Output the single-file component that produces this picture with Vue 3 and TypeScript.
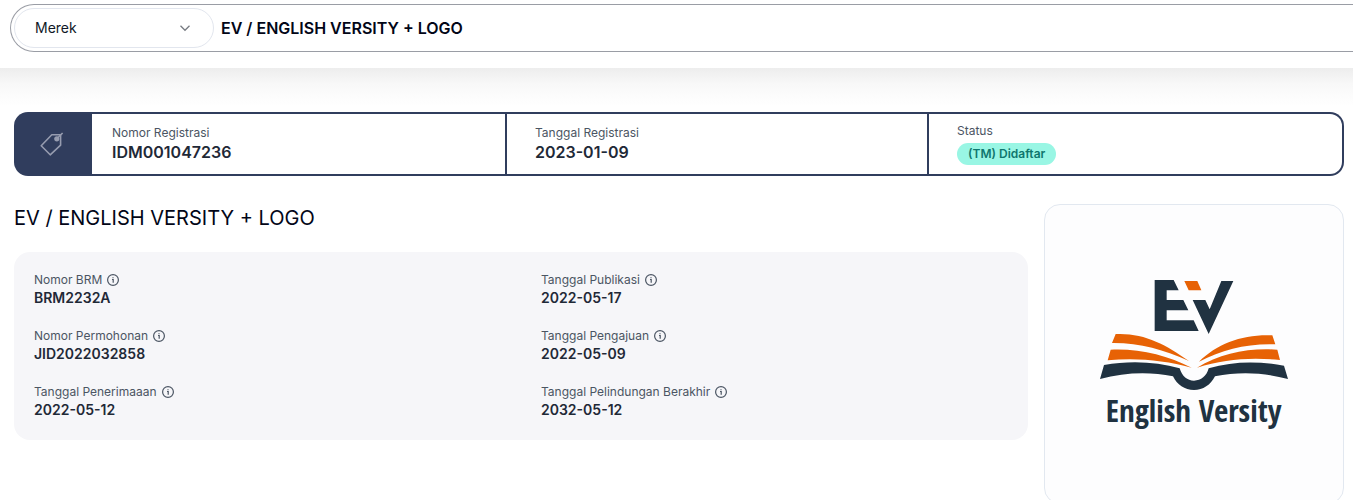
<script setup lang="ts">
import { ref } from 'vue'

interface Field {
  label: string
  value: string
}

const category = ref('Merek')
const query = ref('EV / ENGLISH VERSITY + LOGO')

const details: Field[] = [
  { label: 'Nomor BRM', value: 'BRM2232A' },
  { label: 'Tanggal Publikasi', value: '2022-05-17' },
  { label: 'Nomor Permohonan', value: 'JID2022032858' },
  { label: 'Tanggal Pengajuan', value: '2022-05-09' },
  { label: 'Tanggal Penerimaaan', value: '2022-05-12' },
  { label: 'Tanggal Pelindungan Berakhir', value: '2032-05-12' },
]
</script>

<template>
  <div class="page">
    <header class="top">
      <form class="search" @submit.prevent>
        <div class="picker">
          <select v-model="category" aria-label="Kategori">
            <option>Merek</option>
            <option>Paten</option>
            <option>Desain Industri</option>
          </select>
          <svg class="chevron" viewBox="0 0 12 12" aria-hidden="true">
            <path d="M1.5 3.8 6 8.3l4.5-4.5" />
          </svg>
        </div>
        <input v-model="query" class="query" type="text" aria-label="Pencarian" />
      </form>
    </header>

    <main class="content">
      <section class="summary">
        <div class="tag">
          <svg viewBox="0 0 24 24" aria-hidden="true">
            <path d="M1.2 13.8 11.8 2.8 20.6 2.8V13.2L10.2 22.8Z" />
            <circle cx="16.8" cy="6.8" r="2.6" />
            <path d="M16.8 6.8 22.6 1" />
          </svg>
        </div>
        <dl class="cells">
          <div class="cell">
            <dt>Nomor Registrasi</dt>
            <dd>IDM001047236</dd>
          </div>
          <div class="cell">
            <dt>Tanggal Registrasi</dt>
            <dd>2023-01-09</dd>
          </div>
          <div class="cell">
            <dt>Status</dt>
            <dd class="badge">(TM) Didaftar</dd>
          </div>
        </dl>
      </section>

      <div class="body">
        <section class="info">
          <h1>EV / ENGLISH VERSITY + LOGO</h1>
          <dl class="details">
            <div v-for="item in details" :key="item.label">
              <dt>
                {{ item.label }}
                <svg class="hint" viewBox="0 0 14 14" aria-hidden="true">
                  <circle cx="7" cy="7" r="5.4" />
                  <path d="M6 6.500h1.200v3.200M7 4.200v1" />
                </svg>
              </dt>
              <dd>{{ item.value }}</dd>
            </div>
          </dl>
        </section>

        <figure class="mark">
          <svg viewBox="45 30 894 894" role="img" aria-label="English Versity">
            <g class="navy">
              <path d="M374 255H431L446 286H410V315H460L475 346H410V376H491L506 408H374Z" />
              <path d="M488 315H526L539 343 574 258H610L536 417Z" />
              <path d="M222 510C300 496 380 500 449 520C456 544 472 557 492 557C513 557 530 543 536 520C610 498 685 498 762 512L774 552C700 532 625 530 555 544C542 570 519 585 492 585C464 585 441 569 429 544C358 529 284 532 210 552Z" />
            </g>
            <g class="orange">
              <path d="M463 258H502L514 286H476Z" />
              <path d="M257 417C342 413 407 448 477 498C402 464 327 443 246 444Z" />
              <path d="M242 464C328 460 412 481 485 518C402 495 315 487 233 496Z" />
              <path d="M727 421C640 417 562 445 507 500C578 464 650 445 736 448Z" />
              <path d="M742 464C658 458 572 474 501 518C582 492 664 486 750 495Z" />
            </g>
            <text x="491" y="680" text-anchor="middle">English Versity</text>
          </svg>
        </figure>
      </div>
    </main>
  </div>
</template>

<style>
body {
  margin: 0;
  background: #fff;
  overflow: hidden;
}
</style>

<style scoped>
.page {
  font-family: Inter, "Liberation Sans", sans-serif;
  color: #1f2937;
}
.page * {
  box-sizing: border-box;
}
.top {
  padding: 4px 0 16px 10px;
  background: #fff;
}
.search {
  display: flex;
  align-items: center;
  height: 48px;
  padding-left: 3px;
  border: 1px solid #9a9da5;
  border-right: 0;
  border-radius: 24px 0 0 24px;
}
.picker {
  position: relative;
  width: 200px;
  height: 40px;
}
select {
  appearance: none;
  width: 100%;
  height: 100%;
  padding: 0 40px 0 20px;
  border: 1px solid #e2e6ee;
  border-radius: 20px;
  background: #fff;
  color: #111827;
  font: 400 14px/20px Inter, "Liberation Sans", sans-serif;
}
.chevron {
  position: absolute;
  right: 23px;
  top: 14px;
  width: 12px;
  height: 12px;
  fill: none;
  stroke: #777b82;
  stroke-width: 1.3;
  pointer-events: none;
}
.query {
  flex: 1;
  min-width: 0;
  height: 40px;
  padding: 0 7px;
  border: 0;
  outline: 0;
  background: transparent;
  color: #020617;
  font: 600 16px/24px Inter, "Liberation Sans", sans-serif;
}
.content {
  padding: 44px 9px 0 14px;
  background: linear-gradient(#ededed, #f8f8f8 16px, #fff 38px);
}
.summary {
  display: flex;
  height: 64px;
  padding: 2px;
  border-radius: 14px;
  background: #303d5d;
}
.tag {
  display: flex;
  align-items: center;
  justify-content: center;
  width: 76px;
  padding-right: 4px;
}
.tag svg {
  width: 24px;
  height: 24px;
  fill: none;
  stroke: #969caf;
  stroke-width: 1.6;
  stroke-linejoin: round;
}
.tag circle {
  fill: #969caf;
  stroke: none;
}
dl,
dd,
figure {
  margin: 0;
}
dt {
  color: #4b5563;
  font-size: 12px;
  line-height: 16px;
}
.cells {
  flex: 1;
  display: grid;
  grid-template-columns: 415fr 422fr 413fr;
  border-radius: 0 12px 12px 0;
  background: #fff;
}
.cell {
  display: flex;
  flex-direction: column;
  align-items: flex-start;
  justify-content: center;
  padding-left: 28px;
}
.cell:first-child {
  padding-left: 20px;
}
.cell:not(:last-child) {
  border-right: 2px solid #303d5d;
}
.cell dd {
  font-size: 16px;
  font-weight: 600;
  line-height: 22px;
}
.cell .badge {
  margin-top: 4px;
  padding: 0 11px;
  border-radius: 11px;
  background: #99f6e4;
  color: #0f766e;
  font-size: 12px;
}
.body {
  display: flex;
  align-items: flex-start;
  gap: 16px;
  padding-top: 28px;
}
.info {
  flex: 1;
}
h1 {
  margin: 0;
  color: #020617;
  font-size: 20px;
  font-weight: 400;
  line-height: 28px;
}
.details {
  display: grid;
  grid-template-columns: 1fr 1fr;
  gap: 20px;
  margin-top: 20px;
  padding: 20px 0 20px 20px;
  border-radius: 16px;
  background: #f6f6f9;
}
.details dt {
  display: flex;
  align-items: center;
  gap: 4px;
}
.details dd {
  font-size: 14px;
  font-weight: 600;
  line-height: 20px;
}
.hint {
  width: 14px;
  height: 14px;
  fill: none;
  stroke: #4b5563;
  stroke-width: 1.2;
}
.mark {
  width: 300px;
  height: 300px;
  overflow: hidden;
  border: 1px solid #e2e8f0;
  border-radius: 16px;
  background: #fdfdfe;
}
.mark svg {
  display: block;
  width: 100%;
}
.navy {
  fill: #203241;
}
.orange {
  fill: #e76205;
}
.mark text {
  fill: #203241;
  font: 700 93px "Open Sans Condensed", "Liberation Sans Narrow", "Noto Sans", sans-serif;
}
</style>
